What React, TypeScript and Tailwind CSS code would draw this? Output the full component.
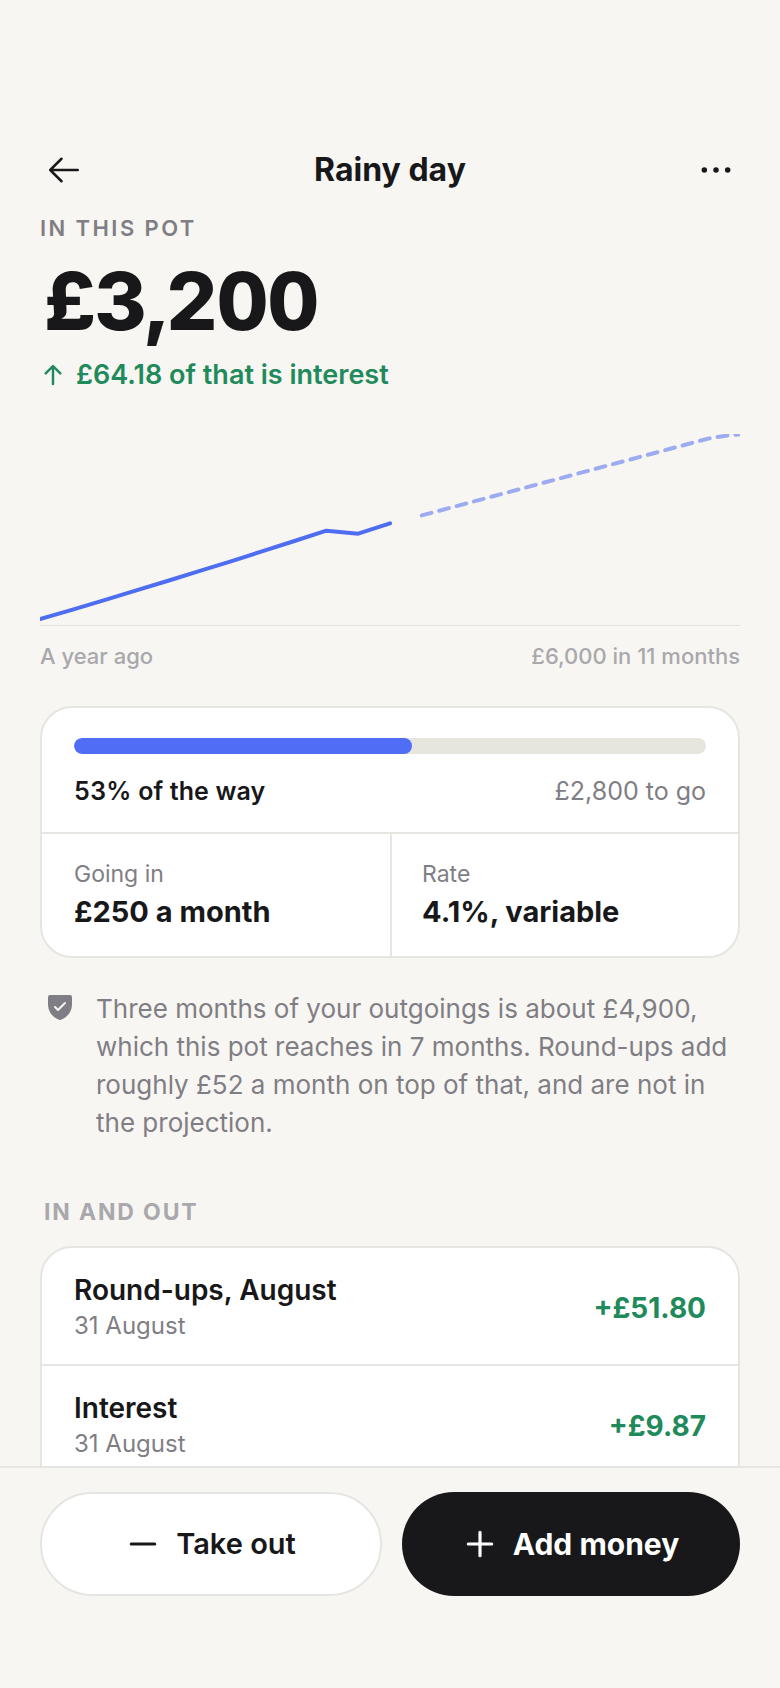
import React from "react";
import {
  PiArrowLeft,
  PiArrowUpBold,
  PiDotsThreeBold,
  PiMinusBold,
  PiPlusBold,
  PiShieldCheckFill,
} from "react-icons/pi";

const movements = [
  { title: "Round-ups, August", date: "31 August", amount: "+£51.80" },
  { title: "Interest", date: "31 August", amount: "+£9.87" },
];

function Chart() {
  return (
    <svg
      viewBox="0 0 700 192"
      className="mt-10 block w-full"
      role="img"
      aria-label="Balance over time"
      fill="none"
      strokeWidth="4"
      strokeLinecap="round"
      strokeLinejoin="round"
    >
      <path d="M0 191.5H700" stroke="#e2e2df" strokeWidth="1" strokeLinecap="butt" />
      <path
        d="M0 185L31.8 175.8L63.6 166.4L95.5 156.7L127.3 147L159.1 137.2L190.9 127.3L222.7 117.2L254.5 107L286.4 96.7L318.2 99.7L350 89.4"
        stroke="#4f6df0"
      />
      <path
        d="M381.8 81.4L668.2 4.6Q684 1.6 700 0.2"
        stroke="#9dabf0"
        strokeDasharray="10 8"
      />
    </svg>
  );
}

export default function App() {
  return (
    <div className="flex h-screen flex-col bg-[#f7f6f2] font-['Inter',sans-serif] text-[#18181a]">
      <header className="flex items-center justify-between px-10 pt-[146px]">
        <button type="button" aria-label="Back" className="flex size-12 items-center justify-center">
          <PiArrowLeft size={40} />
        </button>
        <h1 className="text-[32px] leading-12 font-bold">Rainy day</h1>
        <button type="button" aria-label="More options" className="flex size-12 items-center justify-center">
          <PiDotsThreeBold size={44} />
        </button>
      </header>

      <main className="min-h-0 flex-1 overflow-y-auto px-10 pt-5 [scrollbar-width:none]">
        <p className="text-[22px] leading-7 font-semibold tracking-[0.11em] text-[#7f7e84]">IN THIS POT</p>
        <p className="mt-4 px-1 text-[80px] leading-[86px] font-extrabold tracking-[-1px] tabular-nums">£3,200</p>
        <p className="mt-3 flex items-center gap-[10px] text-[27px] leading-[38px] font-semibold text-[#1f8a5b]">
          <PiArrowUpBold size={26} />
          £64.18 of that is interest
        </p>

        <Chart />
        <div className="mt-4 flex justify-between text-[22px] leading-7 font-medium text-[#a9a8ac]">
          <span>A year ago</span>
          <span>£6,000 in 11 months</span>
        </div>

        <section className="mt-9 rounded-[32px] border-2 border-[#e5e5e2] bg-white">
          <div className="px-8 pt-[30px] pb-6">
            <div
              role="progressbar"
              aria-label="Progress to goal"
              aria-valuenow={53}
              aria-valuemin={0}
              aria-valuemax={100}
              className="h-4 overflow-hidden rounded-full bg-[#e6e6df]"
            >
              <div className="h-full w-[53.5%] rounded-full bg-[#4f6df5]" />
            </div>
            <div className="mt-5 flex justify-between text-[25px] leading-[34px]">
              <span className="font-semibold tabular-nums">53% of the way</span>
              <span className="text-[#7f7e84]">£2,800 to go</span>
            </div>
          </div>
          <dl className="grid grid-cols-2 border-t-2 border-[#e5e5e2]">
            <div className="px-8 py-[26px]">
              <dt className="text-[23px] leading-7 text-[#7f7e84]">Going in</dt>
              <dd className="mt-1.5 text-[29px] leading-9 font-bold">£250 a month</dd>
            </div>
            <div className="border-l-2 border-[#e5e5e2] px-[30px] py-[26px]">
              <dt className="text-[23px] leading-7 text-[#7f7e84]">Rate</dt>
              <dd className="mt-1.5 text-[29px] leading-9 font-bold">4.1%, variable</dd>
            </div>
          </dl>
        </section>

        <div className="mt-8 flex gap-5 px-1">
          <PiShieldCheckFill size={32} className="shrink-0 text-[#7f7e84]" />
          <p className="text-[26px] leading-[38px] text-[#7f7e84]">
            Three months of your outgoings is about £4,900, which this pot reaches in 7 months. Round-ups add roughly
            £52 a month on top of that, and are not in the projection.
          </p>
        </div>

        <h2 className="mt-14 px-1 text-[23px] leading-7 font-bold tracking-[0.08em] text-[#a9a8ac]">IN AND OUT</h2>
        <ul className="mt-5 divide-y-2 divide-[#e5e5e2] rounded-[32px] border-2 border-[#e5e5e2] bg-white pb-8">
          {movements.map((m) => (
            <li key={m.title} className="flex items-center justify-between px-8 py-6">
              <div>
                <p className="text-[28px] leading-9 font-semibold">{m.title}</p>
                <p className="mt-1 text-[24px] leading-7 text-[#7f7e84]">{m.date}</p>
              </div>
              <p className="mt-1 text-[28px] leading-9 font-bold text-[#1f8a5b]">{m.amount}</p>
            </li>
          ))}
        </ul>
      </main>

      <footer className="flex gap-5 border-t-2 border-[#e5e5e2] px-10 pt-6 pb-[92px]">
        <button
          type="button"
          className="flex h-[104px] flex-1 items-center justify-center gap-4 rounded-full border-2 border-[#e5e5e2] bg-white text-[29px] font-semibold"
        >
          <PiMinusBold size={34} />
          Take out
        </button>
        <button
          type="button"
          className="flex h-[104px] flex-1 items-center justify-center gap-4 rounded-full bg-[#18181a] text-[30px] font-bold text-white"
        >
          <PiPlusBold size={34} />
          Add money
        </button>
      </footer>
    </div>
  );
}
